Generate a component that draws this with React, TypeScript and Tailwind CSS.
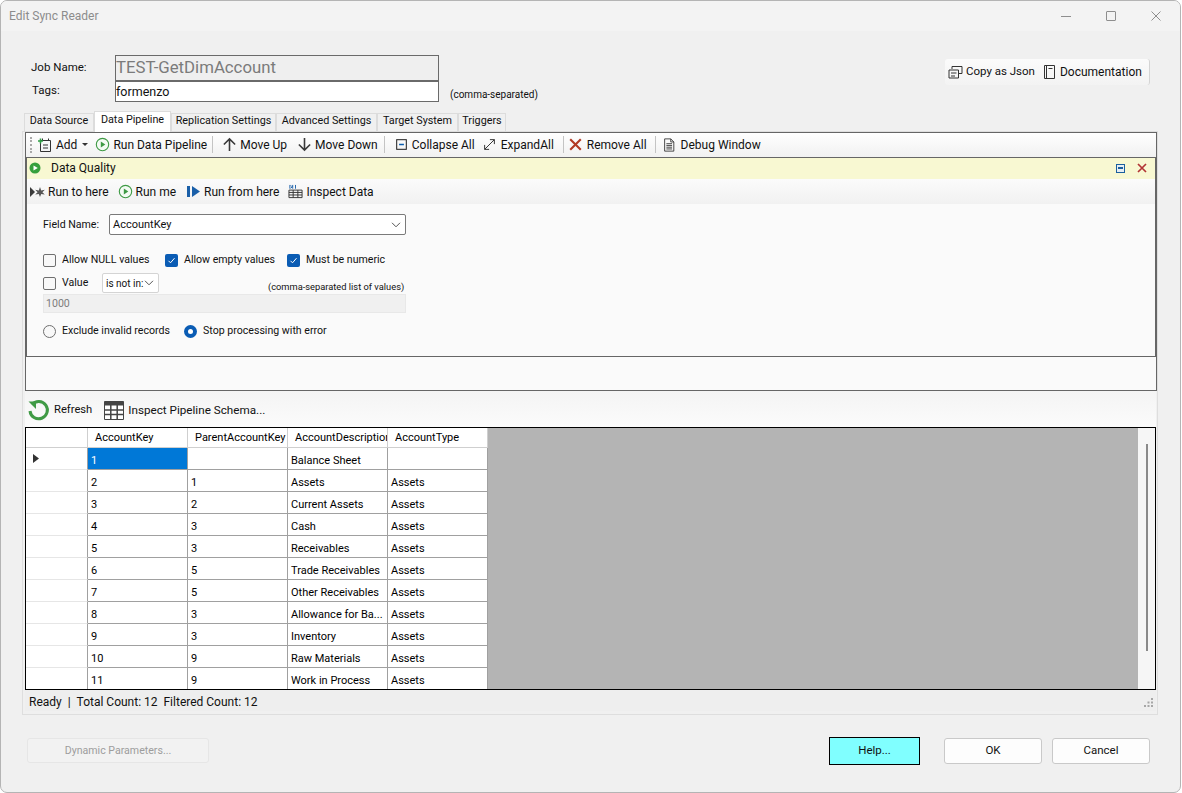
import type { ReactNode } from 'react'

const rows = [
  ['1', '', 'Balance Sheet', ''],
  ['2', '1', 'Assets', 'Assets'],
  ['3', '2', 'Current Assets', 'Assets'],
  ['4', '3', 'Cash', 'Assets'],
  ['5', '3', 'Receivables', 'Assets'],
  ['6', '5', 'Trade Receivables', 'Assets'],
  ['7', '5', 'Other Receivables', 'Assets'],
  ['8', '3', 'Allowance for Ba...', 'Assets'],
  ['9', '3', 'Inventory', 'Assets'],
  ['10', '9', 'Raw Materials', 'Assets'],
  ['11', '9', 'Work in Process', 'Assets'],
]

const headers = ['AccountKey', 'ParentAccountKey', 'AccountDescription', 'AccountType']

function Icon({ children, size = 16 }: { children: ReactNode; size?: number }) {
  return (
    <svg width={size} height={size} viewBox="0 0 16 16" fill="none" className="shrink-0">
      {children}
    </svg>
  )
}

function PlayCircle() {
  return (
    <Icon size={15}>
      <circle cx="8" cy="8" r="6.6" stroke="#3f9a45" strokeWidth="1.2" fill="#f4fbf4" />
      <path d="M6.2 4.8v6.4L11 8z" fill="#3f9a45" />
    </Icon>
  )
}

function Sep() {
  return <div className="w-px h-[17px] bg-[#c4c4c4] shrink-0" />
}

function Tool({ icon, label, className }: { icon: ReactNode; label: string; className: string }) {
  return (
    <div className={`flex items-center shrink-0 ${className}`}>
      {icon}
      <span>{label}</span>
    </div>
  )
}

function Tab({ label, active, width }: { label: string; active?: boolean; width: string }) {
  return (
    <div
      className={`${width} flex justify-center shrink-0 whitespace-nowrap border-t border-x border-[#dcdcdc] text-[10.8px] ${
        active ? 'h-[21px] bg-white items-center pb-[4px]' : 'h-[18px] mt-[2px] bg-[#f0f0f0] items-center pb-[2px]'
      }`}
    >
      {label}
    </div>
  )
}

function CheckBox({ checked }: { checked?: boolean }) {
  return checked ? (
    <div className="w-[13px] h-[13px] rounded-[2px] bg-[#0a5cb4] flex items-center justify-center shrink-0">
      <svg width="9" height="9" viewBox="0 0 9 9" fill="none">
        <path d="M1.5 4.8l2 2 4-4.6" stroke="#fff" strokeWidth="1" />
      </svg>
    </div>
  ) : (
    <div className="w-[13px] h-[13px] rounded-[2px] border border-[#6f6f6f] bg-[#f8f8f8] shrink-0" />
  )
}

function Chevron() {
  return (
    <svg width="10" height="6" viewBox="0 0 10 6" fill="none" className="shrink-0">
      <path d="M1 .8l4 4 4-4" stroke="#555" strokeWidth="1" />
    </svg>
  )
}

export default function App() {
  return (
    <div
      className="h-[793px] w-[1182px] bg-white overflow-hidden text-[12px] text-[#111]"
      style={{ fontFamily: 'Roboto, "Noto Sans", sans-serif' }}
    >
      <div className="h-[793px] w-[1181px] bg-[#f0f0f0] border border-[#b4b4b4] rounded-[7px] overflow-hidden flex flex-col">
        {/* title bar */}
        <div className="h-[30px] shrink-0 bg-[#f3f3f3] flex items-center pl-[8px] text-[#8c8c8c]">
          <span>Edit Sync Reader</span>
          <div className="ml-auto flex items-center pr-[19px] gap-[35px]">
            <div className="w-[10px] h-px bg-[#8e8e8e]" />
            <div className="w-[10px] h-[10px] border border-[#8e8e8e] rounded-[1px]" />
            <svg width="10" height="10" viewBox="0 0 10 10" fill="none">
              <path d="M.5.5l9 9M9.5.5l-9 9" stroke="#8e8e8e" strokeWidth="1" />
            </svg>
          </div>
        </div>

        {/* job fields */}
        <div className="h-[80px] shrink-0 flex relative">
          <div className="flex flex-col pt-[24px] pl-[30px]">
            <div className="flex h-[26px]">
              <span className="w-[84px] pt-[4px] text-[11.5px]">Job Name:</span>
              <div className="w-[324px] h-[26px] border border-[#6a6a6a] bg-[#efefef] text-[#7b7b7b] text-[16.8px] leading-[23px]">
                TEST-GetDimAccount
              </div>
            </div>
            <div className="flex h-[21px]">
              <span className="w-[84px] pl-px pt-[1px] text-[11.5px]">Tags:</span>
              <div className="w-[324px] h-[21px] border border-[#6a6a6a] bg-white text-[12.5px] leading-[19px]">
                formenzo
              </div>
              <span className="ml-[11px] pt-[6px] text-[10px]">(comma-separated)</span>
            </div>
          </div>
          <div className="ml-auto mt-[28px] mr-[30px] w-[205px] h-[26px] bg-gradient-to-b from-[#fbfbfb] to-[#f3f3f3] rounded-[3px] flex items-center border-r border-r-[#d4d4d4] pl-[3px] text-[11.5px]">
            <svg width="15" height="15" viewBox="0 0 15 15" fill="none" className="shrink-0">
              <path d="M4 4V1.5h10v7h-3M1 5h9.5v8H1zM3 8h5.5M3 11h4" stroke="#333" strokeWidth="1" />
            </svg>
            <span className="ml-[3px]">Copy as Json</span>
            <svg width="13" height="14" viewBox="0 0 13 14" fill="none" className="ml-[8px] shrink-0">
              <path d="M1.5.5h10v13h-10zM3.5.5v13M5.5 3.5h4" stroke="#333" strokeWidth="1" />
            </svg>
            <span className="ml-[4px] text-[12px]">Documentation</span>
          </div>
        </div>

        {/* tabs */}
        <div className="h-[20px] shrink-0 flex pl-[23px] relative z-10">
          <Tab label="Data Source" width="w-[70px]" />
          <Tab label="Data Pipeline" active width="w-[77px]" />
          <Tab label="Replication Settings" width="w-[105px]" />
          <Tab label="Advanced Settings" width="w-[101px]" />
          <Tab label="Target System" width="w-[81px]" />
          <Tab label="Triggers" width="w-[48px]" />
        </div>

        {/* tab page */}
        <div className="ml-[21px] w-[1136px] h-[584px] shrink-0 border border-[#dedede] bg-[#f0f0f0] pl-[2px] flex flex-col">
          <div className="h-[259px] w-[1132px] shrink-0 border border-[#666] bg-[#fafafa] flex flex-col">
            {/* pipeline toolbar */}
            <div className="h-[24px] shrink-0 bg-gradient-to-b from-white to-[#f1f1f1] flex items-center pl-[4px] pb-px">
              <div className="w-[2px] h-[16px] border-l-2 border-dotted border-[#a8a8a8] shrink-0" />
              <Tool
                className="ml-[5px] gap-[3px]"
                label="Add"
                icon={
                  <Icon size={16}>
                    <path d="M3.5 3.5h10v11h-10zM5.500 1.500v2M11.500 1.500v2M6 8h5M6 11h5" stroke="#333" />
                    <path d="M1 4h5M3.500 1.500v5" stroke="#2f9e44" strokeWidth="1.6" />
                  </Icon>
                }
              />
              <svg width="6" height="3" viewBox="0 0 6 3" className="ml-[5px] shrink-0">
                <path d="M0 0h6L3 3z" fill="#333" />
              </svg>
              <Tool className="ml-[7px] gap-[3px]" label="Run Data Pipeline" icon={<PlayCircle />} />
              <div className="ml-[5px]"><Sep /></div>
              <Tool
                className="ml-[9px] gap-[3px]"
                label="Move Up"
                icon={
                  <Icon size={15}>
                    <path d="M8 15V2M2 8l6-6 6 6" stroke="#3a3a3a" strokeWidth="1.7" />
                  </Icon>
                }
              />
              <Tool
                className="ml-[10px] gap-[3px]"
                label="Move Down"
                icon={
                  <Icon size={15}>
                    <path d="M8 1v13M2 8l6 6 6-6" stroke="#3a3a3a" strokeWidth="1.7" />
                  </Icon>
                }
              />
              <div className="ml-[6px]"><Sep /></div>
              <Tool
                className="ml-[11px] gap-[5px]"
                label="Collapse All"
                icon={
                  <Icon size={11}>
                    <rect x="1" y="1" width="14" height="14" stroke="#222" strokeWidth="1.5" />
                    <path d="M4.500 8h7" stroke="#0b5cad" strokeWidth="2" />
                  </Icon>
                }
              />
              <Tool
                className="ml-[8px] gap-[5px]"
                label="ExpandAll"
                icon={
                  <Icon size={13}>
                    <path d="M2 14L14 2M8.500 2H14v5.500M2 8.500V14h5.500" stroke="#333" strokeWidth="1.2" />
                  </Icon>
                }
              />
              <div className="ml-[9px]"><Sep /></div>
              <Tool
                className="ml-[5px] gap-[5px]"
                label="Remove All"
                icon={
                  <Icon size={13}>
                    <path d="M1.500 1.500l13 13M14.500 1.500l-13 13" stroke="#b23a24" strokeWidth="2.6" />
                  </Icon>
                }
              />
              <div className="ml-[8px]"><Sep /></div>
              <Tool
                className="ml-[6px] gap-[5px]"
                label="Debug Window"
                icon={
                  <Icon size={14}>
                    <path d="M3 1h7l3.500 3.500V15H3zM10 1v3.500h3.500M5 6.500h6.500M5 8.500h6.500M5 10.500h6.500M5 12.500h6.500" stroke="#333" />
                  </Icon>
                }
              />
            </div>

            {/* data quality block */}
            <div className="border border-[#666] h-[200px] shrink-0 bg-[#fafafa] flex flex-col">
              <div className="h-[21px] shrink-0 bg-[#f8f8d2] flex items-center pl-[2px] pr-[8px] pb-px">
                <svg width="12" height="12" viewBox="0 0 12 12" className="shrink-0">
                  <circle cx="6" cy="6" r="5.500" fill="#36a03c" />
                  <path d="M4.500 3.400v5.200L8.800 6z" fill="#fff" />
                </svg>
                <span className="ml-[10px]">Data Quality</span>
                <div className="ml-auto mr-[12px] w-[9px] h-[9px] border border-[#1b5f9e] bg-[#e6edf2] flex items-center justify-center">
                  <div className="w-[5px] h-[2px] bg-[#1b5f9e]" />
                </div>
                <svg width="10" height="10" viewBox="0 0 10 10" className="shrink-0">
                  <path d="M1 1l8 8M9 1L1 9" stroke="#b23434" strokeWidth="1.7" />
                </svg>
              </div>
              <div className="h-[25px] shrink-0 bg-gradient-to-b from-[#fbfbfb] to-[#f1f1f1] flex items-center pl-[3px]">
                <Tool
                  className="gap-[3px]"
                  label="Run to here"
                  icon={
                    <svg width="15" height="10" viewBox="0 0 15 10" className="shrink-0">
                      <path d="M0 0l5 5-5 5z" fill="#3a3a3a" />
                      <path d="M10 0l1.200 3.400 3.600-.6-2.400 2.400 2.400 2.400-3.600-.6L10 10l-1.200-3-3.600.4 2.400-2.200-2.400-2.400 3.600.6z" fill="#555" />
                    </svg>
                  }
                />
                <Tool className="ml-[9px] gap-[3px]" label="Run me" icon={<PlayCircle />} />
                <Tool
                  className="ml-[11px] gap-[4px]"
                  label="Run from here"
                  icon={
                    <svg width="13" height="11" viewBox="0 0 13 11" className="shrink-0">
                      <path d="M0 0h3v11H0z" fill="#1a5fa8" />
                      <path d="M5 0l8 5.500L5 11z" fill="#1a5fa8" />
                    </svg>
                  }
                />
                <Tool
                  className="ml-[9px] gap-[3px]"
                  label="Inspect Data"
                  icon={
                    <Icon size={15}>
                      <path d="M2 1v4M5 1v4M3 1.500L4.500 3 3 4.500M8 1v4" stroke="#1a5fa8" />
                      <path d="M1 6.500h14v8H1zM1 9h14M1 11.700h14M5.500 6.500v8M10.500 6.500v8" stroke="#333" />
                    </Icon>
                  }
                />
              </div>

              {/* form */}
              <div className="pl-[16px] text-[10.6px]">
                <div className="flex items-center h-[21px] mt-[10px]">
                  <span className="w-[66px] pt-px">Field Name:</span>
                  <div className="w-[297px] h-[21px] border border-[#7a7a7a] rounded-[2px] bg-white flex items-center justify-between pl-[3px] pr-[4px] text-[11px]">
                    <span className="pt-px">AccountKey</span>
                    <Chevron />
                  </div>
                </div>
                <div className="flex items-center h-[14px] mt-[18px]">
                  <CheckBox />
                  <span className="ml-[6px] w-[103px]">Allow NULL values</span>
                  <CheckBox checked />
                  <span className="ml-[6px] w-[103px]">Allow empty values</span>
                  <CheckBox checked />
                  <span className="ml-[6px]">Must be numeric</span>
                </div>
                <div className="flex h-[20px] mt-[6px]">
                  <div className="flex items-center">
                    <CheckBox />
                    <span className="ml-[6px] w-[40px]">Value</span>
                  </div>
                  <div className="w-[57px] h-[20px] border border-[#d4d4d4] rounded-[2px] bg-white flex items-center justify-between pl-[3px] pr-[4px] text-[10px]">
                    <span>is not in:</span>
                    <Chevron />
                  </div>
                  <span className="ml-[109px] pt-[7px] text-[9.3px] w-[135px] text-right whitespace-nowrap">
                    (comma-separated list of values)
                  </span>
                </div>
                <div className="w-[363px] h-[19px] mt-[1px] border border-[#e8e8e8] bg-[#f0f0f0] text-[#7d7d7d] pl-[2px] leading-[17px]">
                  1000
                </div>
                <div className="flex items-center h-[14px] mt-[11px]">
                  <div className="w-[13px] h-[13px] rounded-full border border-[#6f6f6f] bg-[#f8f8f8] shrink-0" />
                  <span className="ml-[6px] w-[122px]">Exclude invalid records</span>
                  <div className="w-[13px] h-[13px] rounded-full bg-[#0a5cb4] flex items-center justify-center shrink-0">
                    <div className="w-[5px] h-[5px] rounded-full bg-white" />
                  </div>
                  <span className="ml-[6px]">Stop processing with error</span>
                </div>
              </div>
            </div>
          </div>

          {/* refresh toolbar */}
          <div className="h-[36px] shrink-0 w-[1131px] bg-gradient-to-b from-[#f4f4f4] to-[#fbfbfb] flex items-center pl-[2px] pt-[3px]">
            <svg width="23" height="23" viewBox="0 0 23 23" fill="none" className="shrink-0">
              <path d="M5 5.500A8.700 8.700 0 1 1 3 12" stroke="#3f9a45" strokeWidth="3" />
              <path d="M1.500 2.500h7.500v7.500z" fill="#3f9a45" />
            </svg>
            <span className="ml-[4px] text-[11.2px]">Refresh</span>
            <svg width="20" height="19" viewBox="0 0 20 19" fill="none" className="ml-[12px] shrink-0">
              <path d="M.5.5h19v18H.5z" fill="#fff" stroke="#444" />
              <path d="M.5.5h19v4H.5z" fill="#444" />
              <path d="M0 9h20M0 13.500h20M6.800 4v15M13.200 4v15" stroke="#444" strokeWidth="1.500" />
            </svg>
            <span className="ml-[4px] text-[11.7px]">Inspect Pipeline Schema...</span>
          </div>

          {/* results grid */}
          <div className="h-[263px] w-[1131px] shrink-0 border border-black bg-[#b4b4b4] flex overflow-hidden text-[11px] text-black">
            <div className="w-[462px] shrink-0 bg-white flex flex-col">
              <div className="h-[20px] shrink-0 flex border-b border-[#cfcfcf]">
                <div className="w-[62px] shrink-0 border-r border-[#cfcfcf]" />
                {headers.map((h) => (
                  <div
                    key={h}
                    className="w-[100px] shrink-0 border-r border-[#cfcfcf] pl-[7px] pt-[2px] flex items-center overflow-hidden whitespace-nowrap"
                  >
                    {h}
                  </div>
                ))}
              </div>
              {rows.map((row, i) => (
                <div key={row[0]} className="h-[22px] shrink-0 flex">
                  <div className="w-[62px] shrink-0 border-r border-[#a0a0a0] border-b border-b-[#e6e6e6] flex items-center pl-[7px]">
                    {i === 0 && (
                      <svg width="6" height="9" viewBox="0 0 6 9">
                        <path d="M0 0l6 4.500-6 4.500z" fill="#333" />
                      </svg>
                    )}
                  </div>
                  {row.map((cell, j) => (
                    <div
                      key={j}
                      className={`w-[100px] shrink-0 border-r border-b border-[#a0a0a0] pl-[3px] pt-[5px] flex items-center overflow-hidden whitespace-nowrap ${
                        i === 0 && j === 0 ? 'bg-[#0078d7] text-white' : ''
                      }`}
                    >
                      {cell}
                    </div>
                  ))}
                </div>
              ))}
            </div>
            <div className="flex-1" />
            <div className="w-[17px] shrink-0 bg-[#f6f6f6] pt-[16px] pl-[8px]">
              <div className="w-[2px] h-[207px] bg-[#8a8a8a]" />
            </div>
          </div>

          {/* status strip */}
          <div className="h-[21px] shrink-0 w-[1131px] bg-[#eeeeee] flex items-center pl-[4px] pr-[2px] pt-[2px]">
            <span>Ready&nbsp;&nbsp;|&nbsp;&nbsp;Total Count: 12&nbsp;&nbsp;Filtered Count: 12</span>
            <svg width="11" height="11" viewBox="0 0 11 11" className="ml-auto mt-[2px]">
              <path d="M8 1h2v2H8zM4.500 4.500h2v2h-2zM8 4.500h2v2H8zM1 8h2v2H1zM4.500 8h2v2h-2zM8 8h2v2H8z" fill="#a6a6a6" />
            </svg>
          </div>
        </div>

        {/* footer buttons */}
        <div className="flex items-start mt-[22px] pl-[26px] text-[11.5px]">
          <div className="mt-px w-[182px] h-[25px] border border-[#e6e6e6] rounded-[3px] bg-[#f2f2f2] text-[#9d9d9d] flex items-center justify-center text-[10.6px]">
            Dynamic Parameters...
          </div>
          <div className="ml-[620px] w-[91px] h-[28px] border border-black bg-[#80ffff] flex items-center justify-center">
            Help...
          </div>
          <div className="ml-[24px] mt-px w-[98px] h-[26px] border border-[#c9c9c9] rounded-[3px] bg-[#fdfdfd] flex items-center justify-center">
            OK
          </div>
          <div className="ml-[10px] mt-px w-[98px] h-[26px] border border-[#c9c9c9] rounded-[3px] bg-[#fdfdfd] flex items-center justify-center">
            Cancel
          </div>
        </div>
      </div>
    </div>
  )
}
